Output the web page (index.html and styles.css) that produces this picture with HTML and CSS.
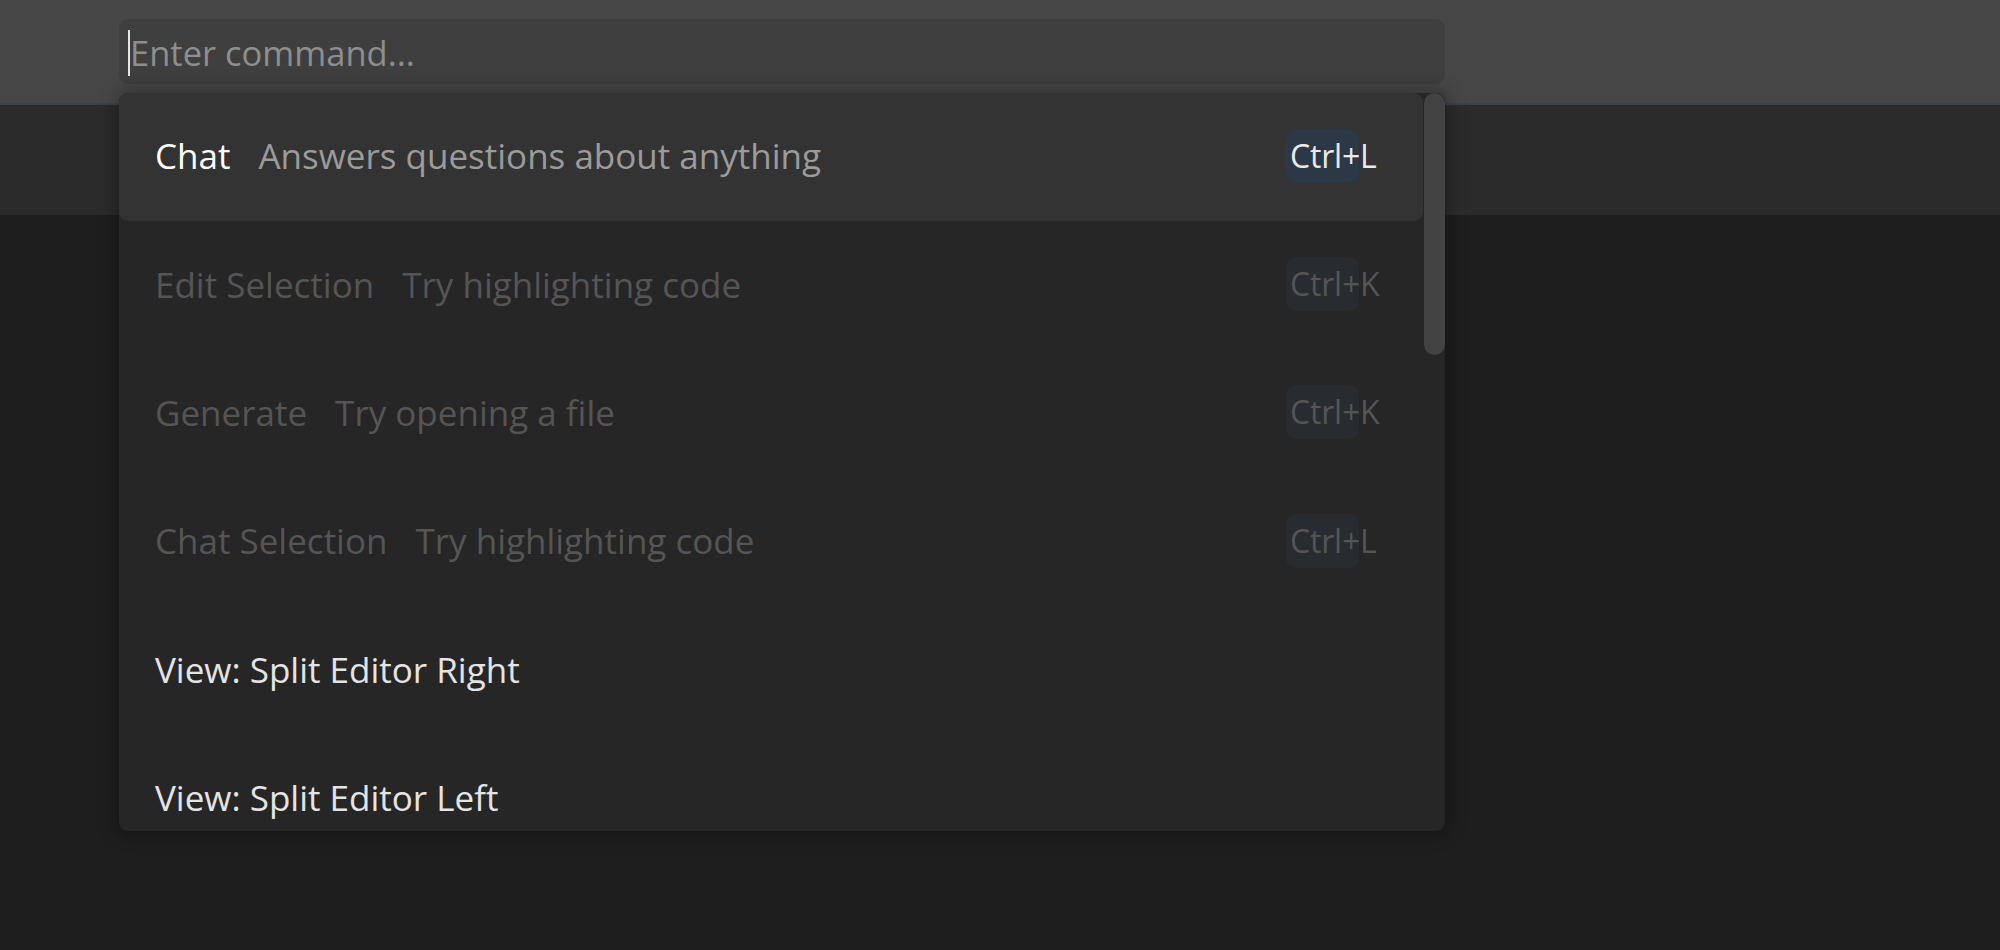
FILE: index.html
```html
<!DOCTYPE html>
<html lang="en">
<head>
<meta charset="utf-8">
<title>Command palette</title>
<link rel="stylesheet" href="styles.css">
</head>
<body>
<div class="window">
  <header class="titlebar"></header>
  <div class="tabbar"></div>
  <main class="editor"></main>

  <div class="palette">
    <div class="input">
      <span class="caret"></span>
      <span class="placeholder">Enter command...</span>
    </div>
    <div class="list">
      <div class="rows">
        <div class="row selected">
          <span class="title">Chat</span>
          <span class="desc">Answers questions about anything</span>
          <span class="kbd">Ctrl+L</span>
        </div>
        <div class="row disabled">
          <span class="title">Edit Selection</span>
          <span class="desc">Try highlighting code</span>
          <span class="kbd">Ctrl+K</span>
        </div>
        <div class="row disabled">
          <span class="title">Generate</span>
          <span class="desc">Try opening a file</span>
          <span class="kbd">Ctrl+K</span>
        </div>
        <div class="row disabled">
          <span class="title">Chat Selection</span>
          <span class="desc">Try highlighting code</span>
          <span class="kbd">Ctrl+L</span>
        </div>
        <div class="row">
          <span class="title">View: Split Editor Right</span>
        </div>
        <div class="row">
          <span class="title">View: Split Editor Left</span>
        </div>
      </div>
      <div class="scrollbar"><div class="thumb"></div></div>
    </div>
  </div>
</div>
</body>
</html>
```

FILE: styles.css
```css
* { box-sizing: border-box; }

html, body {
  margin: 0;
  height: 100%;
}

body {
  background: #1e1e1e;
  font-family: "Open Sans", "Noto Sans", "DejaVu Sans", sans-serif;
  overflow: hidden;
}

.window {
  position: relative;
  display: flex;
  flex-direction: column;
  height: 950px;
}

.titlebar {
  height: 105px;
  flex: none;
  background: #474747;
  border-bottom: 2px solid #3b4250;
}

.tabbar {
  height: 110px;
  flex: none;
  background: #2b2b2b;
}

.editor {
  flex: 1;
  background: #1e1e1e;
}

/* overlay: quick input widget */
.palette {
  position: absolute;
  left: 119px;
  top: 19px;
  width: 1326px;
  display: flex;
  flex-direction: column;
  gap: 9px;
}

.input {
  height: 65px;
  background: #3f3f3f;
  border-radius: 9px;
  display: flex;
  align-items: center;
  padding-left: 9px;
}

.caret {
  width: 2px;
  height: 46px;
  background: #e6e6e6;
  margin-top: 3px;
}

.placeholder {
  font-size: 34.5px;
  color: #8e8e8e;
  padding-left: 0;
  margin-top: 2px;
}

.list {
  position: relative;
  height: 738px;
  background: #262626;
  border-radius: 9px;
  overflow: hidden;
  box-shadow: 0 0 18px 4px rgba(0, 0, 0, 0.28);
}

.rows {
  padding-right: 22px;
  display: flex;
  flex-direction: column;
}

.row {
  height: 128.4px;
  flex: none;
  display: flex;
  align-items: center;
  padding-left: 36px;
  padding-right: 64px;
  font-size: 35px;
  border-radius: 9px;
  padding-bottom: 3px;
}

.row .title {
  color: #e4e4e4;
}

.row .desc {
  margin-left: 28px;
  color: #9b9b9b;
}

.row.selected {
  background: #333333;
}

.row.selected .title {
  color: #ffffff;
  font-weight: 500;
}

.row.disabled .title,
.row.disabled .desc {
  color: #555555;
}

.kbd {
  margin-left: auto;
  width: 73px;
  height: 54px;
  flex: none;
  border-radius: 10px;
  background: #2d3846;
  color: #eaeaea;
  font-size: 32px;
  line-height: 54px;
  padding-left: 4px;
  white-space: nowrap;
  overflow: visible;
  letter-spacing: -0.2px;
}

.row.disabled .kbd {
  background: #282c31;
  color: #545454;
}

.scrollbar {
  position: absolute;
  top: 0;
  right: 0;
  width: 22px;
  height: 100%;
}

.thumb {
  width: 21px;
  height: 262px;
  margin-left: 1px;
  background: #434343;
  border-radius: 11px;
}
```
